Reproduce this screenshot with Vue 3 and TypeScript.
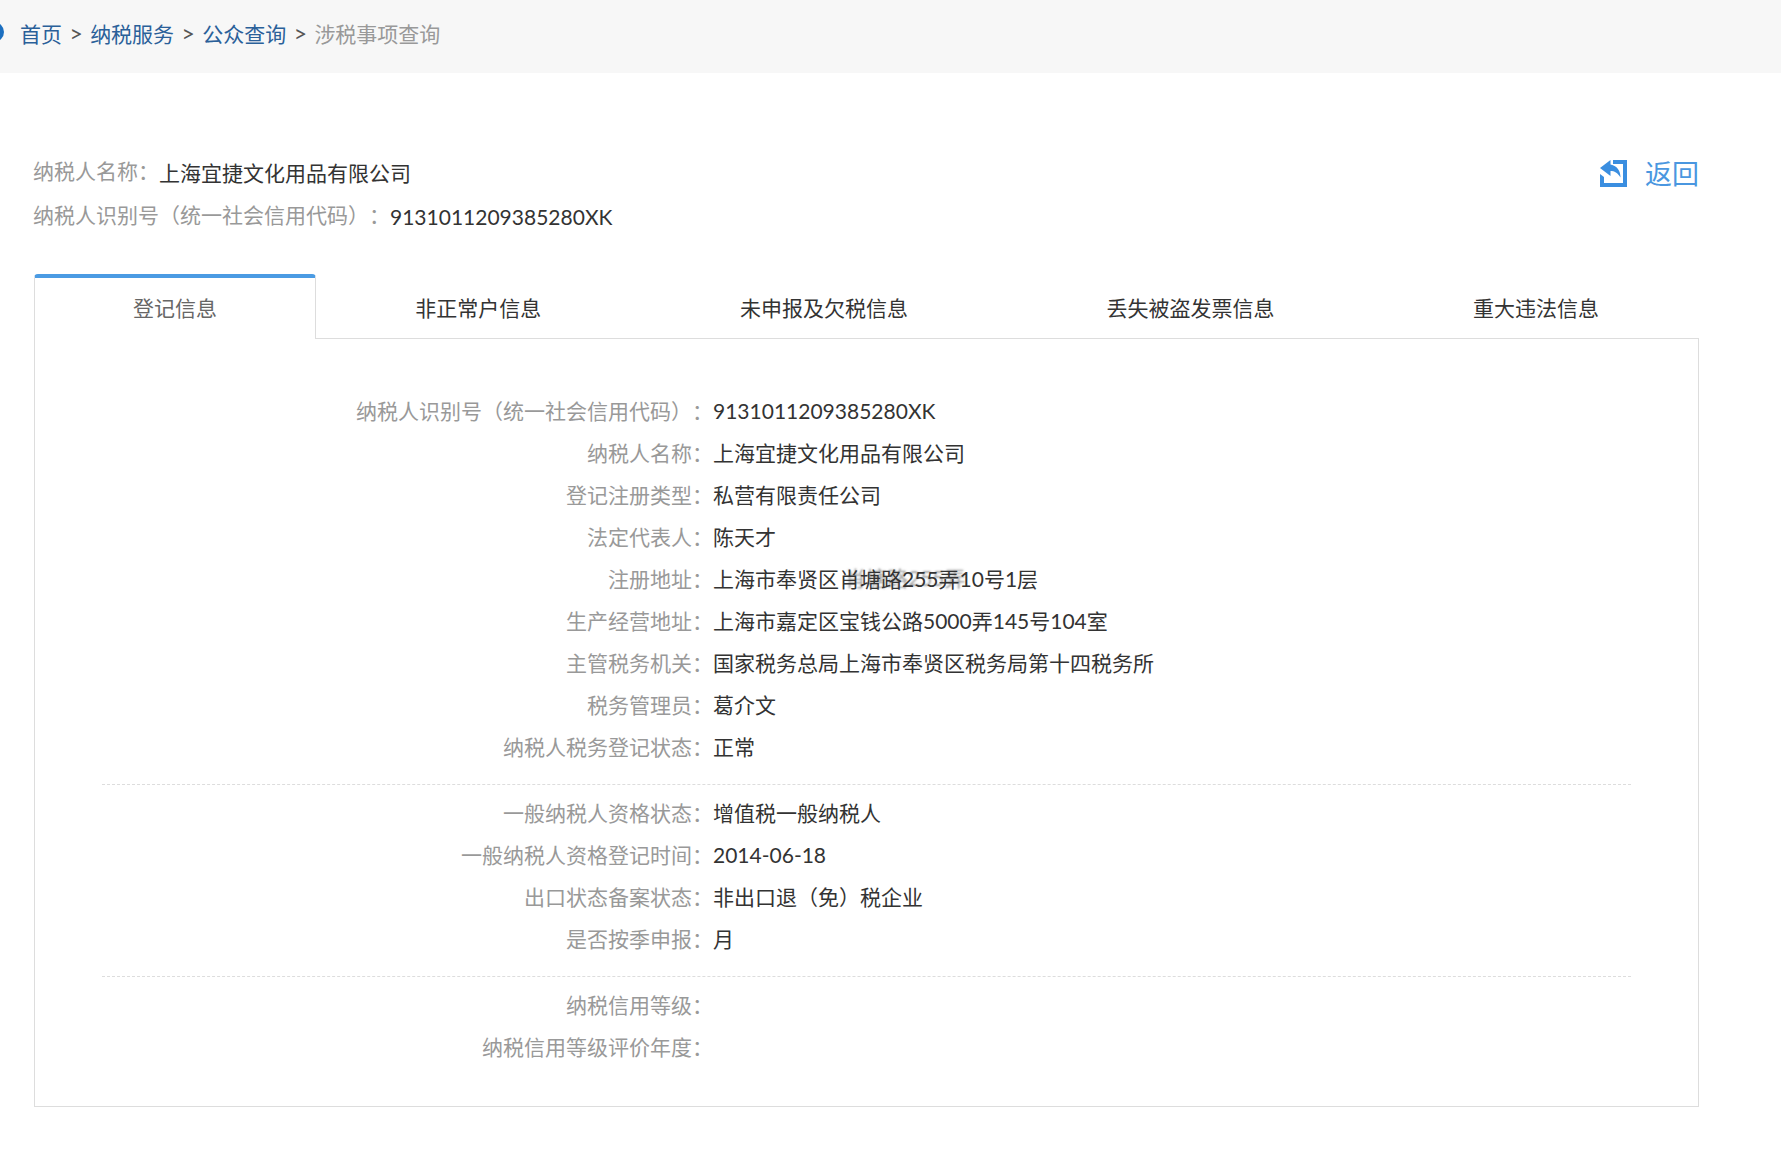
<script setup lang="ts">
interface Row { label: string; value: string; smudge?: string; after?: string }
const crumbs: string[] = ['首页', '纳税服务', '公众查询']
const tabs: string[] = ['登记信息', '非正常户信息', '未申报及欠税信息', '丢失被盗发票信息', '重大违法信息']
const groups: Row[][] = [
  [
    { label: '纳税人识别号（统一社会信用代码）', value: '9131011209385280XK' },
    { label: '纳税人名称', value: '上海宜捷文化用品有限公司' },
    { label: '登记注册类型', value: '私营有限责任公司' },
    { label: '法定代表人', value: '陈天才' },
    { label: '注册地址', value: '上海市奉贤区', smudge: '肖塘路255弄', after: '10号1层' },
    { label: '生产经营地址', value: '上海市嘉定区宝钱公路5000弄145号104室' },
    { label: '主管税务机关', value: '国家税务总局上海市奉贤区税务局第十四税务所' },
    { label: '税务管理员', value: '葛介文' },
    { label: '纳税人税务登记状态', value: '正常' },
  ],
  [
    { label: '一般纳税人资格状态', value: '增值税一般纳税人' },
    { label: '一般纳税人资格登记时间', value: '2014-06-18' },
    { label: '出口状态备案状态', value: '非出口退（免）税企业' },
    { label: '是否按季申报', value: '月' },
  ],
  [
    { label: '纳税信用等级', value: '' },
    { label: '纳税信用等级评价年度', value: '' },
  ],
]
</script>

<template>
  <div class="page">
    <nav class="crumbs">
      <span class="dot"></span>
      <template v-for="c in crumbs" :key="c">
        <a class="crumb">{{ c }}</a><span class="sep">&gt;</span>
      </template>
      <span class="current">涉税事项查询</span>
    </nav>

    <header class="head">
      <div class="who">
        <div class="who-line"><span class="k">纳税人名称：</span><span class="v">上海宜捷文化用品有限公司</span></div>
        <div class="who-line"><span class="k">纳税人识别号（统一社会信用代码）：</span><span class="v">9131011209385280XK</span></div>
      </div>
      <a class="back">
        <svg class="back-icon" viewBox="0 0 27 27" width="27" height="27">
          <path fill="#3a8ee0" d="M13 0h14v27H0V14l4 3v6h19V4H13z" />
          <path fill="#3a8ee0" d="M10.500 0 0 8l10.500 8v-5c4 0 7 1.500 10 6.500 0-6.500-3-11.500-10-13z" />
        </svg>
        <span>返回</span>
      </a>
    </header>

    <div class="tabs">
      <div v-for="(t, i) in tabs" :key="t" class="tab" :class="{ active: i === 0 }">{{ t }}</div>
      <div class="tabs-rest"></div>
    </div>

    <section class="panel">
      <div v-for="(g, gi) in groups" :key="gi" class="group">
        <div v-for="r in g" :key="r.label" class="row">
          <span class="label">{{ r.label }}：</span>
          <span class="value">{{ r.value }}<span v-if="r.smudge" class="smudge">{{ r.smudge }}</span>{{ r.after }}</span>
        </div>
      </div>
    </section>
  </div>
</template>

<style>
html, body { margin: 0; background: #fff; }
</style>

<style scoped>
.page {
  width: 1781px;
  height: 1153px;
  overflow: hidden;
  font-family: Lato, "Noto Sans CJK SC", "Noto Sans", sans-serif;
  font-size: 21px;
  color: #333;
  text-spacing-trim: space-all;
}
.crumbs {
  height: 65px;
  padding: 0 0 8px 20px;
  background: #f7f7f7;
  display: flex;
  align-items: center;
  position: relative;
  white-space: nowrap;
}
.dot {
  position: absolute;
  left: -16px;
  top: 22px;
  width: 20px;
  height: 20px;
  border-radius: 50%;
  background: #1c6fc0;
}
.crumb { color: #2a6099; }
.sep { color: #555; margin: 0 7.400px; font-size: 23px; }
.current { color: #999; }
.head {
  display: flex;
  justify-content: space-between;
  align-items: flex-start;
  margin: 76px 82px 0 33px;
}
.who-line { height: 44px; line-height: 44px; white-space: nowrap; }
.k { color: #999; vertical-align: 2px; }
.v { color: #333; }
.back {
  display: flex;
  align-items: center;
  gap: 18px;
  color: #4a97e0;
  font-size: 27px;
  height: 44px;
  padding-top: 1px;
}
.back-icon { display: block; margin-top: 3px; }
.tabs {
  display: flex;
  margin: 37px 82px 0 34px;
  height: 65px;
}
.tab {
  flex: none;
  height: 64px;
  line-height: 68px;
  padding: 0 99.300px;
  border-bottom: 1px solid #ddd;
  white-space: nowrap;
  color: #333;
}
.tab.active {
  width: 282px;
  box-sizing: border-box;
  height: 65px;
  padding: 0;
  text-align: center;
  color: #666;
  border: 1px solid #ddd;
  border-top: 4px solid #4b9be3;
  border-bottom: 0;
  border-radius: 4px 4px 0 0;
  line-height: 59px;
}
.tabs-rest { flex: 1; border-bottom: 1px solid #ddd; height: 64px; }
.panel {
  margin: 0 82px 0 34px;
  height: 768px;
  box-sizing: border-box;
  border: 1px solid #ddd;
  border-top: 0;
  padding: 51px 67px 0;
}
.group { padding: 0 0 16px; margin-bottom: 7px; border-bottom: 1px dashed #ddd; }
.group:last-child { border-bottom: 0; }
.row { display: flex; height: 42px; line-height: 42px; white-space: nowrap; }
.label { width: 611px; text-align: right; color: #999; }
.value { color: #333; }
.smudge { text-shadow: 6px -1px 2px rgba(70, 70, 70, .5); }
</style>
